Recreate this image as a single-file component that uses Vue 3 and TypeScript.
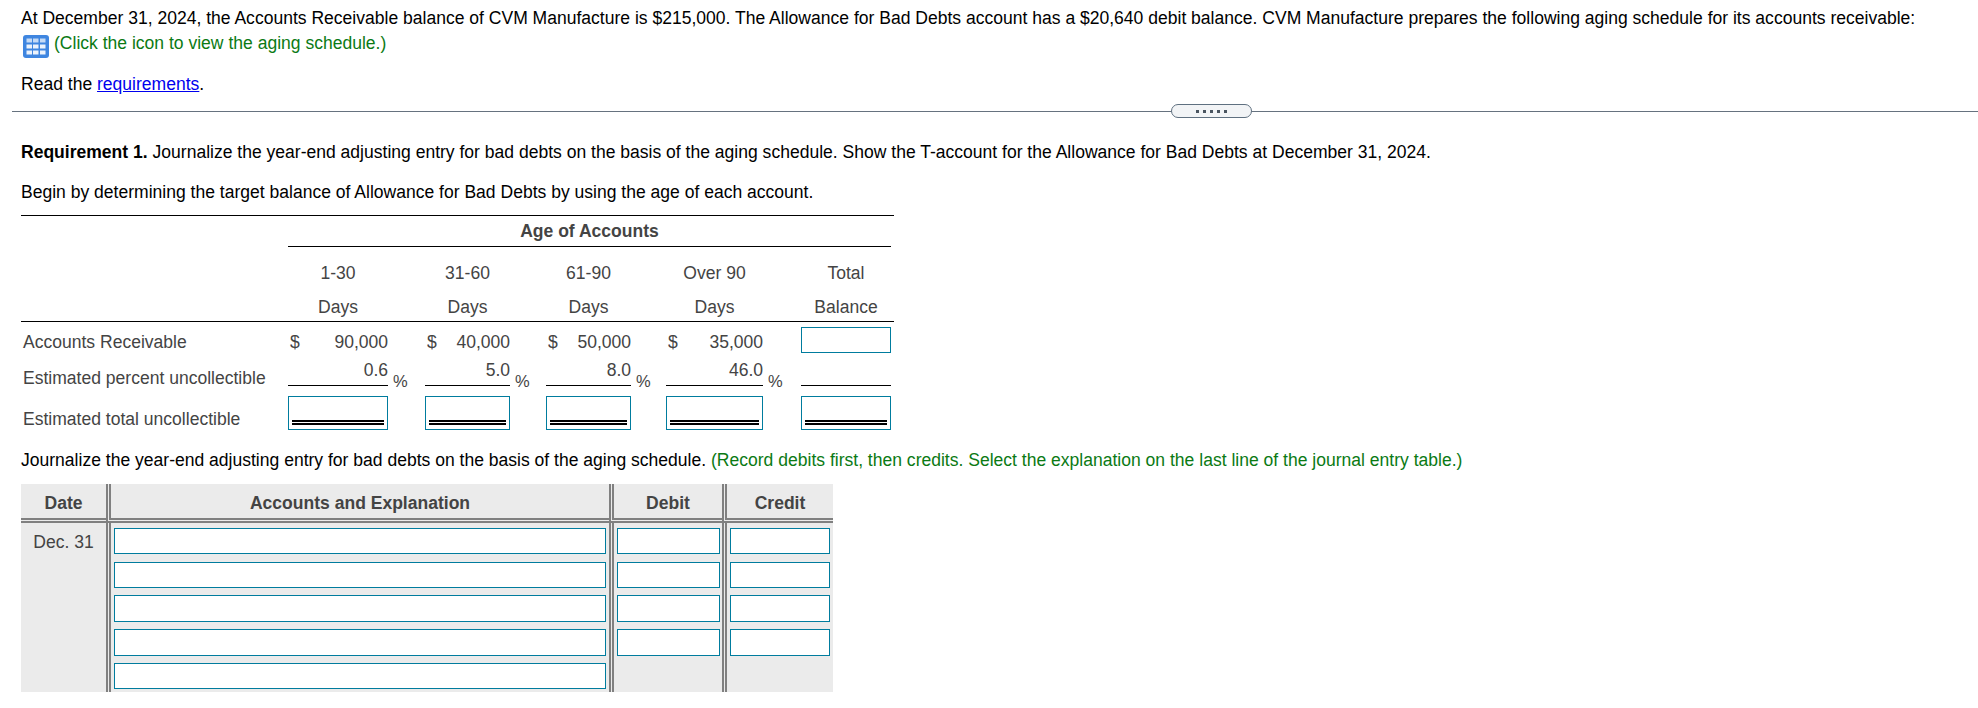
<script setup lang="ts">
const headers = [
  { top: '1-30', bottom: 'Days', col: 2 },
  { top: '31-60', bottom: 'Days', col: 4 },
  { top: '61-90', bottom: 'Days', col: 6 },
  { top: 'Over 90', bottom: 'Days', col: 8 },
  { top: 'Total', bottom: 'Balance', col: 10 },
]
const amounts = ['90,000', '40,000', '50,000', '35,000']
const percents = ['0.6', '5.0', '8.0', '46.0']
const journalRows = [true, true, true, true, false]
</script>

<template>
  <main class="page">
    <section class="intro">
      <p class="line-one">At December 31, 2024, the Accounts Receivable balance of CVM Manufacture is $215,000. The Allowance for Bad Debts account has a $20,640 debit balance. CVM Manufacture prepares the following aging schedule for its accounts receivable:</p>
      <p class="line-two">
        <svg class="grid-icon" width="26" height="23" viewBox="0 0 26 23" aria-hidden="true">
          <rect x="0" y="0" width="26" height="23" rx="3" fill="#3f86e0" />
          <g fill="#ffffff">
            <rect v-for="c in [3.5, 10, 17]" :key="'a' + c" :x="c" y="3.5" width="5.5" height="4" fill-opacity="0.7" />
            <rect v-for="c in [3.5, 10, 17]" :key="'b' + c" :x="c" y="9.5" width="5.5" height="4" fill-opacity="0.9" />
            <rect v-for="c in [3.5, 10, 17]" :key="'c' + c" :x="c" y="15.5" width="5.5" height="4" fill-opacity="0.9" />
          </g>
        </svg>
        <span class="green">(Click the icon to view the aging schedule.)</span>
      </p>
      <p class="line-three">Read the <a class="link" href="#">requirements</a>.</p>
    </section>

    <div class="divider">
      <span class="pill"><i v-for="n in 5" :key="n"></i></span>
    </div>

    <p class="req"><b>Requirement 1.</b> Journalize the year-end adjusting entry for bad debts on the basis of the aging schedule. Show the T-account for the Allowance for Bad Debts at December 31, 2024.</p>
    <p class="begin">Begin by determining the target balance of Allowance for Bad Debts by using the age of each account.</p>

    <div class="aging">
      <div class="age-title">Age of Accounts</div>

      <template v-for="h in headers" :key="h.top">
        <div class="head-top" :style="{ gridColumn: h.col }">{{ h.top }}</div>
        <div class="head-bottom" :style="{ gridColumn: h.col }">{{ h.bottom }}</div>
      </template>
      <div class="head-rule"></div>

      <div class="label r-ar">Accounts Receivable</div>
      <div v-for="(a, i) in amounts" :key="a" class="amount r-ar" :style="{ gridColumn: 2 + i * 2 }">
        <span>$</span><span>{{ a }}</span>
      </div>
      <div class="field total r-ar"></div>

      <div class="label r-pct">Estimated percent uncollectible</div>
      <template v-for="(p, i) in percents" :key="p">
        <div class="pct r-pct" :style="{ gridColumn: 2 + i * 2 }">{{ p }}</div>
        <div class="pct-sign r-pct" :style="{ gridColumn: 3 + i * 2 }">%</div>
      </template>
      <div class="pct r-pct total"></div>

      <div class="label r-est">Estimated total uncollectible</div>
      <div v-for="c in [2, 4, 6, 8, 10]" :key="c" class="field dbl r-est" :style="{ gridColumn: c }"></div>
    </div>

    <p class="journal-intro">Journalize the year-end adjusting entry for bad debts on the basis of the aging schedule. <span class="green">(Record debits first, then credits. Select the explanation on the last line of the journal entry table.)</span></p>

    <div class="journal">
      <div class="jh">Date</div>
      <div class="jh sep">Accounts and Explanation</div>
      <div class="jh sep">Debit</div>
      <div class="jh sep">Credit</div>

      <div class="jc date">Dec. 31</div>
      <div class="jc sep stack">
        <div v-for="(_, i) in journalRows" :key="i" class="field"></div>
      </div>
      <div class="jc sep stack debit">
        <template v-for="(has, i) in journalRows" :key="i">
          <div v-if="has" class="field"></div>
        </template>
      </div>
      <div class="jc sep stack">
        <template v-for="(has, i) in journalRows" :key="i">
          <div v-if="has" class="field"></div>
        </template>
      </div>
    </div>
  </main>
</template>

<style>
html, body { margin: 0; background: #ffffff; }
</style>

<style scoped>
.page {
  position: relative;
  width: 1978px;
  height: 708px;
  overflow: hidden;
  font-family: "Liberation Sans", Arial, sans-serif;
  font-size: 17.55px;
  line-height: 20px;
  color: #000;
  box-sizing: border-box;
}
p { margin: 0; }
.intro { padding: 8px 0 0 21px; }
.line-two { display: flex; align-items: center; height: 26px; margin-top: 2px; padding-left: 2px; }
.grid-icon { margin: 6px 5px 0 0; flex: none; }
.green { color: #0b7a14; }
.line-three { margin-top: 18px; }
.link { color: #0000ee; text-decoration: underline; }
.divider {
  position: relative;
  margin: 17px 0 0 12px;
  height: 1px;
  background: #66727f;
}
.pill {
  position: absolute;
  left: 1159px;
  top: -7px;
  width: 81px;
  height: 14px;
  box-sizing: border-box;
  border: 1px solid #5f7080;
  border-radius: 7px;
  background: #f2f4f6;
  display: flex;
  align-items: center;
  justify-content: center;
  gap: 4px;
}
.pill i { width: 3px; height: 3px; background: #4a5560; display: block; }
.req { margin: 30px 0 0 21px; }
.begin { margin: 20px 0 0 21px; }

.aging {
  margin: 13px 0 0 21px;
  width: 873px;
  display: grid;
  grid-template-columns: 267px 100px 37px 85px 36px 85px 35px 97px 38px 90px 3px;
  grid-template-rows: 31px 41px 34px 32px 32px 43px;
  border-top: 1px solid #000;
  color: #444;
}
.age-title {
  grid-column: 2 / 11;
  grid-row: 1;
  font-weight: 700;
  text-align: center;
  line-height: 30px;
  border-bottom: 1px solid #000;
  box-sizing: border-box;
}
.head-top { grid-row: 2; text-align: center; align-self: end; line-height: 20px; padding-bottom: 5px; }
.head-bottom { grid-row: 3; text-align: center; align-self: end; line-height: 20px; padding-bottom: 5px; }
.head-rule { grid-column: 1 / -1; grid-row: 3; align-self: end; border-bottom: 1px solid #000; }
.label { grid-column: 1; padding-left: 2px; align-self: center; }
.label.r-ar { padding-top: 8px; }
.label.r-pct { padding-top: 16px; }
.label.r-est { padding-top: 22px; }
.amount { display: flex; justify-content: space-between; align-self: center; padding: 8px 0 0 2px; }
.r-ar { grid-row: 4; }
.r-pct { grid-row: 5; }
.r-est { grid-row: 6; }
.field {
  box-sizing: border-box;
  border: 1px solid #007c9e;
  background: #fff;
}
.total { grid-column: 10; }
.field.total { height: 26px; margin-top: 5px; }
.pct {
  border-bottom: 1px solid #000;
  text-align: right;
  height: 32px;
  box-sizing: border-box;
  line-height: 32px;
}
.pct-sign { padding: 14px 0 0 5px; line-height: 26px; font-size: 16.5px; }
.dbl {
  position: relative;
  height: 34px;
  margin-top: 10px;
}
.dbl::after {
  content: "";
  position: absolute;
  left: 3px;
  right: 3px;
  bottom: 4px;
  height: 5px;
  box-sizing: border-box;
  border-top: 2px solid #000;
  border-bottom: 2px solid #000;
}

.journal-intro { margin: 21px 0 0 21px; }

.journal {
  margin: 14px 0 0 21px;
  width: 812px;
  height: 208px;
  display: grid;
  grid-template-columns: 85px 503px 113px 111px;
  grid-template-rows: 39px 169px;
  background: #ebebeb;
  color: #444;
}
.jh {
  font-weight: 700;
  text-align: center;
  border-bottom: 5px double #808080;
  line-height: 38px;
  box-sizing: border-box;
}
.sep { border-left: 5px double #808080; box-sizing: border-box; }
.date { text-align: center; padding-top: 9px; line-height: 20px; }
.stack {
  display: grid;
  grid-template-rows: 27px 26px 27px 27px 26px;
  row-gap: 7px;
  padding: 5px 3px 0;
  align-content: start;
}
.stack .field:first-child { height: 26px; }
.debit { padding-right: 2px; }
</style>
